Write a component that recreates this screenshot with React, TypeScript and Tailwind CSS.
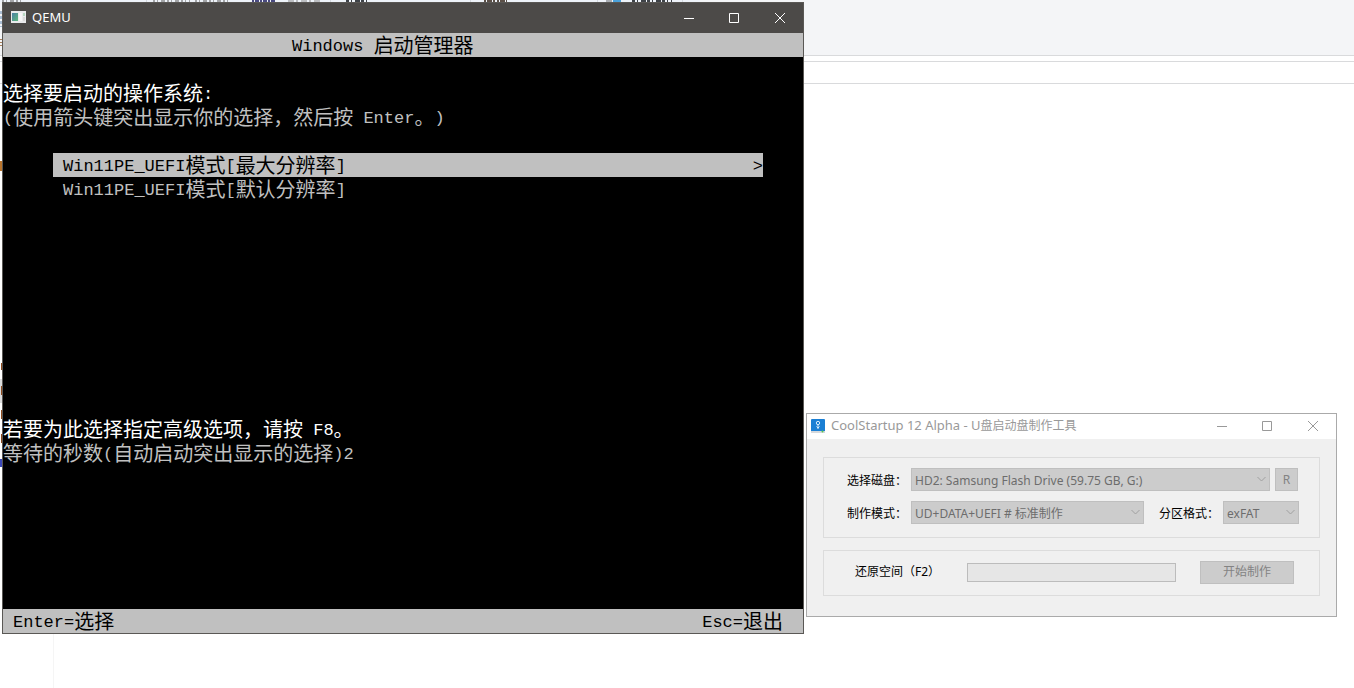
import React from 'react';

const uiFont = 'font-["Noto_Sans","Noto_Sans_CJK_SC",sans-serif]';

// Console rows use half-width latin cells and full-width CJK cells
const ConsoleText: React.FC<{ text: string }> = ({ text }) => {
  const parts = text.match(/[\x20-\x7e]+|[^\x20-\x7e]+/g) ?? [];
  return (
    <span className='flex h-6 items-center whitespace-pre leading-6 font-["Liberation_Mono","Noto_Sans_CJK_SC",monospace]'>
      {parts.map((part, i) =>
        /^[\x20-\x7e]/.test(part) ? (
          <span key={i} className="pt-1 text-[17px]">{part}</span>
        ) : (
          <span key={i} className="pt-1.5 text-[20px] [text-spacing-trim:space-all]">{part}</span>
        )
      )}
    </span>
  );
};

const WindowButtons: React.FC = () => (
  <div className="flex h-full items-center">
    <button type="button" aria-label="Minimize" className="flex h-full w-[46px] items-center justify-center">
      <svg width="10" height="10" viewBox="0 0 10 10" stroke="currentColor" fill="none"><path d="M0 5.5h10" /></svg>
    </button>
    <button type="button" aria-label="Maximize" className="flex h-full w-[45px] items-center justify-center pr-px">
      <svg width="10" height="10" viewBox="0 0 10 10" stroke="currentColor" fill="none"><path d="M.5 .5h9v9h-9z" /></svg>
    </button>
    <button type="button" aria-label="Close" className="flex h-full w-[46px] items-center justify-center">
      <svg width="10" height="10" viewBox="0 0 10 10" stroke="currentColor" fill="none"><path d="M0 0l10 10M10 0L0 10" /></svg>
    </button>
  </div>
);

const bootEntries = ['Win11PE_UEFI模式[最大分辨率]', 'Win11PE_UEFI模式[默认分辨率]'];

const QemuWindow: React.FC = () => (
  <section className="absolute top-[2px] left-[2px] w-[802px] border border-[#5a5855] bg-black">
    <header className="flex h-[30px] items-center bg-[#4c4a48] pb-px pl-2 text-white">
      <svg width="15" height="13" viewBox="0 0 15 13">
        <defs>
          <linearGradient id="screen" x1="0" y1="0" x2="1" y2="1">
            <stop offset="0" stopColor="#4a7fa5" />
            <stop offset="1" stopColor="#5fb97c" />
          </linearGradient>
        </defs>
        <path d="M0 0h15v12H0z" fill="#e9eaec" />
        <path d="M1 2h6v8H1z" fill="url(#screen)" />
        <path d="M8 2h3v8H8z" fill="#f6f6f6" />
        <path d="M12 2h2v3h-2z" fill="#b5d8c0" />
        <path d="M12 6h2v4h-2z" fill="#dadada" />
      </svg>
      <h1 className={`ml-1.5 flex-1 text-[13px] ${uiFont}`}>QEMU</h1>
      <WindowButtons />
    </header>

    <div className="flex flex-col text-[#c0c0c0]">
      <div className="bg-[#c0c0c0] pl-[289px] text-black"><ConsoleText text="Windows 启动管理器" /></div>

      <div className="mt-6 text-white"><ConsoleText text="选择要启动的操作系统:" /></div>
      <ConsoleText text="(使用箭头键突出显示你的选择，然后按 Enter。)" />

      <ul className="mt-6 mr-10 ml-[50px]">
        {bootEntries.map((entry, i) => (
          <li key={entry} className={`flex justify-between pl-2.5 ${i === 0 ? 'bg-[#c0c0c0] text-black' : ''}`}>
            <ConsoleText text={entry} />
            {i === 0 && <ConsoleText text=">" />}
          </li>
        ))}
      </ul>

      <div className="mt-[216px] text-white"><ConsoleText text="若要为此选择指定高级选项，请按 F8。" /></div>
      <ConsoleText text="等待的秒数(自动启动突出显示的选择)2" />

      <footer className="mt-36 flex justify-between bg-[#c0c0c0] pr-5 pl-2.5 text-black">
        <ConsoleText text="Enter=选择" />
        <ConsoleText text="Esc=退出" />
      </footer>
    </div>
  </section>
);

const DisabledSelect: React.FC<{ id: string; value: string; className: string }> = ({ id, value, className }) => (
  <div className={`relative ${className}`}>
    <select
      id={id}
      disabled
      className="h-[23px] w-full appearance-none border border-[#bfbfbf] bg-[#cccccc] pt-0.5 pl-[3px] text-[#6d6d6d] opacity-100"
    >
      <option>{value}</option>
    </select>
    <svg className="absolute top-2 right-1" width="9" height="7" viewBox="0 0 9 7" fill="none" stroke="#a0a0a0">
      <path d="M.5 1l4 4 4-4" />
    </svg>
  </div>
);

const StartupWindow: React.FC = () => (
  <section className={`absolute top-[413px] left-[806px] w-[531px] border border-[#aaaaaa] bg-[#f0f0f0] text-xs text-black ${uiFont}`}>
    <header className="flex h-[25px] items-center bg-white pb-px pl-1 text-[#999999]">
      <svg width="14" height="14" viewBox="0 0 14 14">
        <path d="M1 0h12q1 0 1 1v11H0V1q0-1 1-1z" fill="#1a7fd4" />
        <path d="M0 12h14v2H0z" fill="#d5d8dc" />
        <circle cx="11.5" cy="12.5" r="1" fill="#57c84d" />
        <circle cx="7" cy="4" r="1.7" fill="none" stroke="#d6ebfb" />
        <path d="M7 5.500V10M5.500 7.500L7 9l1.500-1.500" fill="none" stroke="#d6ebfb" />
      </svg>
      <h2 className="ml-1.5 flex-1"><span className="text-[13px]">CoolStartup 12 Alpha - U</span>盘启动盘制作工具</h2>
      <WindowButtons />
    </header>

    <form className="flex flex-col gap-3 px-4 pt-[18px] pb-5">
      <div className="flex flex-col gap-2.5 border border-[#dcdcdc] pt-2.5 pr-5 pb-[13px] pl-[23px]">
        <div className="flex items-center">
          <label htmlFor="disk" className="w-16 pt-0.5">选择磁盘：</label>
          <DisabledSelect id="disk" value="HD2: Samsung Flash Drive (59.75 GB, G:)" className="flex-1" />
          <button type="button" disabled className="mr-px ml-[5px] h-[23px] w-[23px] border border-[#bfbfbf] bg-[#cccccc] text-[#838383]">R</button>
        </div>
        <div className="flex items-center">
          <label htmlFor="mode" className="w-16 pt-0.5">制作模式：</label>
          <DisabledSelect id="mode" value="UD+DATA+UEFI # 标准制作" className="w-[233px]" />
          <label htmlFor="format" className="ml-[15px] w-16 pt-0.5">分区格式：</label>
          <DisabledSelect id="format" value="exFAT" className="flex-1" />
        </div>
      </div>

      <div className="flex h-[46px] items-center border border-[#dcdcdc] pr-[25px] pb-0.5 pl-[31px]">
        <label htmlFor="restore" className="w-28">还原空间（F2）</label>
        <input id="restore" disabled className="h-[19px] w-[209px] border border-[#bcbcbc] bg-[#e6e6e6]" />
        <button type="button" disabled className="ml-auto h-[23px] w-[94px] border border-[#bfbfbf] bg-[#cccccc] text-[#838383]">开始制作</button>
      </div>
    </form>
  </section>
);

// Slivers of the page that stay visible around the QEMU window
const PageEdges: React.FC = () => (
  <svg className="absolute top-0 left-0" width="700" height="480" viewBox="0 0 700 480" fill="none" aria-hidden="true">
    <path d="M0 1h700" stroke="#eef3f9" strokeWidth="2" />
    <path d="M146.500 0v2M330.500 0v2M470.500 0v2M597.500 0v2M682.500 0v2" stroke="#d5dae0" />
    <path d="M2 1h22M153 1h37M195 1h36" stroke="#a3a5a8" strokeWidth="2" strokeDasharray="2 2 1 3 4 2" />
    <path d="M252 1h23" stroke="#4a4a80" strokeWidth="2" strokeDasharray="2 1 4 1" />
    <path d="M288 1h34" stroke="#8a8a8a" strokeDasharray="6 2 2 3" />
    <path d="M346 1h24M632 1h40" stroke="#3f4348" strokeWidth="2" strokeDasharray="3 2 1 3 5 1" />
    <path d="M484 1h11M497 1h10" stroke="#5b5048" strokeWidth="2" strokeDasharray="2 1 5 1" />
    <path d="M606 1h6" stroke="#a9adb2" strokeWidth="2" />
    <path d="M613 1h8" stroke="#4ba3dc" strokeWidth="2" />
    <path d="M1 11v16" stroke="#a9bdd2" strokeWidth="2" strokeDasharray="3 2" />
    <path d="M1 39v9" stroke="#a8805c" strokeWidth="2" strokeDasharray="1 2" />
    <path d="M1 379v24" stroke="#dcdcdc" strokeWidth="2" />
    <path d="M1 161v10" stroke="#b8742c" strokeWidth="2" />
    <path d="M1.500 363v7M1.500 386v9M1.500 410v9M1.500 434v9" stroke="#8f4a1c" />
    <path d="M1 459v8" stroke="#3c48b8" strokeWidth="2" />
  </svg>
);

const App: React.FC = () => {
  return (
    <main className="relative min-h-screen overflow-hidden bg-white">
      <div className="h-14 border-b border-[#d9dadc] bg-[#f4f5f7]"></div>
      <div className="mt-[5px] h-[23px] border-y border-[#d9dadc]"></div>
      <div className="ml-[53px] h-[604px] border-l border-[#f5f5f5]"></div>
      <PageEdges />
      <QemuWindow />
      <StartupWindow />
    </main>
  );
};

export default App;
